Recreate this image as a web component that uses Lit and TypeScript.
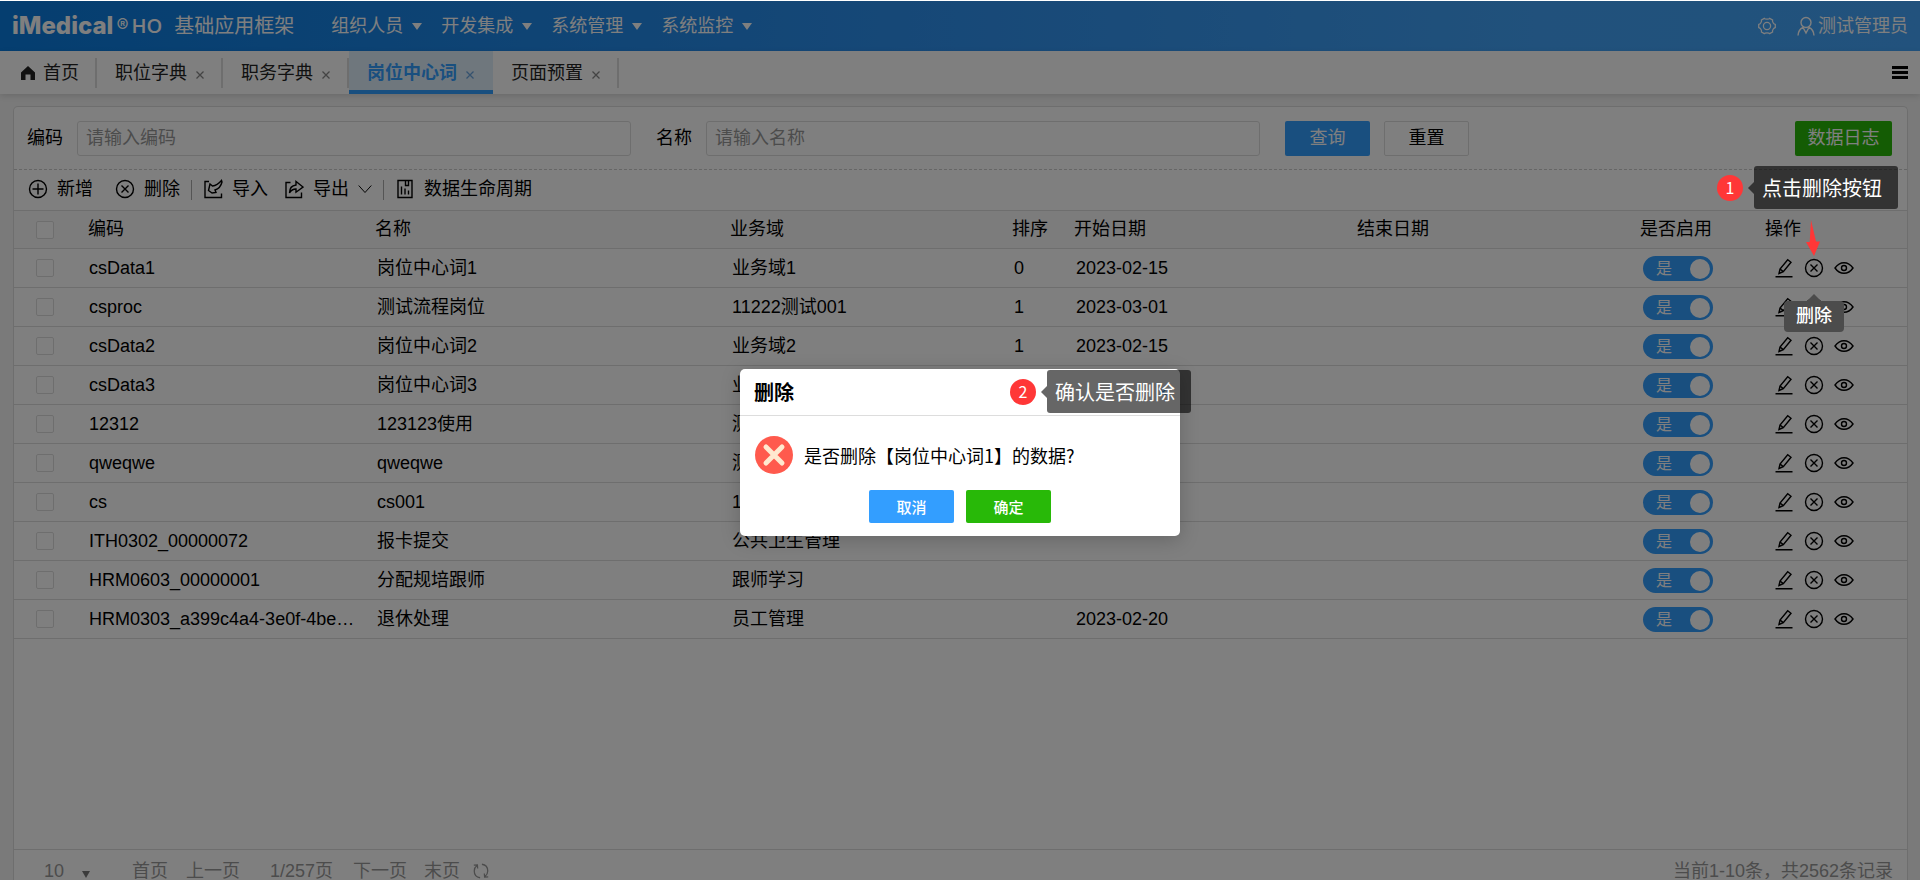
import { LitElement, html, css, svg } from "lit";
import { customElement, property } from "lit/decorators.js";

interface Row {
  code: string;
  name: string;
  domain: string;
  order: string;
  start: string;
}

const rows: Row[] = [
  { code: "csData1", name: "岗位中心词1", domain: "业务域1", order: "0", start: "2023-02-15" },
  { code: "csproc", name: "测试流程岗位", domain: "11222测试001", order: "1", start: "2023-03-01" },
  { code: "csData2", name: "岗位中心词2", domain: "业务域2", order: "1", start: "2023-02-15" },
  { code: "csData3", name: "岗位中心词3", domain: "业务域3", order: "", start: "" },
  { code: "12312", name: "123123使用", domain: "测试", order: "", start: "" },
  { code: "qweqwe", name: "qweqwe", domain: "测试", order: "", start: "" },
  { code: "cs", name: "cs001", domain: "1", order: "", start: "" },
  { code: "ITH0302_00000072", name: "报卡提交", domain: "公共卫生管理", order: "", start: "" },
  { code: "HRM0603_00000001", name: "分配规培跟师", domain: "跟师学习", order: "", start: "" },
  { code: "HRM0303_a399c4a4-3e0f-4be8-9c1d", name: "退休处理", domain: "员工管理", order: "", start: "2023-02-20" },
];

const glyphs = {
  add: svg`<circle cx="10" cy="10" r="8.5"/><path d="M10 4.5v11M4.5 10h11"/>`,
  remove: svg`<circle cx="10" cy="10" r="8.5"/><path d="M6.5 6.5l7 7M13.5 6.5l-7 7"/>`,
  import: svg`<path d="M6 2.500H2V18.500h16.500v-4M9 14L5.500 11.500 7 5l2.500 2c3-.3 6-2 9-5.500l.5 1.500c-1 4-3.500 7-7 8l1 2.500z"/>`,
  export: svg`<path d="M6.500 3.500H2v15h15.500v-5M5.500 14c0-4.500 2.500-7.500 6.500-8V2.500L19 8l-7 5.200v-3.200c-2.800 0-5 1.200-6.500 4z"/>`,
  down: svg`<path d="M1 5l9 10 9-10"/>`,
  report: svg`<path d="M3 1.500h14v17H3zM10.500 1.500v5h3v-5M6.500 7.500v8M10 9.500v6M13.500 11.500v4"/>`,
  edit: svg`<path d="M1.500 18.700h17M5 15.500l1-4.500 7.700-9.300 3.300 2.600-7.700 9.300zM6 11l3.300 2.600"/>`,
  eye: svg`<path d="M1 10c2.500-3.600 5.500-5.300 9-5.300s6.500 1.700 9 5.300c-2.500 3.600-5.500 5.300-9 5.300S3.500 13.600 1 10z"/><circle cx="10" cy="10" r="2.500"/>`,
  gear: svg`<path d="M7 1.500c1 1.300 5 1.300 6 0l3.200 1.900c-.6 1.600 1.200 4.700 3 4.900v3.400c-1.800.2-3.600 3.300-3 4.900L13 18.500c-1-1.300-5-1.300-6 0l-3.200-1.900c.6-1.600-1.200-4.700-3-4.900V8.300c1.800-.2 3.600-3.300 3-4.900z"/><circle cx="10" cy="10" r="4"/>`,
  user: svg`<circle cx="10" cy="6.500" r="5"/><path d="M2 19.500c.3-4.500 2.500-7 5-8l3 5.500 3-5.500c2.500 1 4.700 3.500 5 8"/>`,
  refresh: svg`<path d="M9 17.500C5 17 2.500 14 2.500 10c0-2.500 1-4.500 3-6M2 3.500l4-.3.300 4M11 2.500c4 .5 6.500 3.500 6.500 7.500 0 2.500-1 4.500-3 6M18 16.500l-4 .3-.3-4"/>`,
};

@customElement("ui-icon")
export class UiIcon extends LitElement {
  @property() name: keyof typeof glyphs = "add";

  static styles = css`
    :host {
      display: inline-flex;
      width: 20px;
      height: 20px;
      flex: none;
    }
    .glyph {
      width: 100%;
      height: 100%;
      fill: none;
      stroke: currentColor;
      stroke-width: 1.4;
    }
  `;

  render() {
    return html`<svg class="glyph" viewBox="0 0 20 20" aria-hidden="true">${glyphs[this.name]}</svg>`;
  }
}

@customElement("app-root")
export class AppRoot extends LitElement {
  static styles = css`
    :host {
      display: flex;
      flex-direction: column;
      position: relative;
      height: 100vh;
      overflow: hidden;
      background: #f4f4f4;
      color: #000;
      font-family: "Liberation Sans", "Noto Sans CJK SC", sans-serif;
      font-size: 18px;
      line-height: 20px;
    }
    * {
      box-sizing: border-box;
    }
    button,
    input,
    select {
      font: inherit;
      color: inherit;
      margin: 0;
      padding: 0;
      border: 0;
      background: none;
      border-radius: 0;
    }
    button {
      display: inline-flex;
      align-items: center;
      white-space: nowrap;
    }
    a {
      color: inherit;
      text-decoration: none;
    }

    .header {
      display: flex;
      align-items: center;
      flex: none;
      height: 51px;
      padding: 0 12px;
      border-top: 1px solid #fff;
      background: linear-gradient(90deg, #0a7ce0, #2f92f0 50%, #42a3f8 80%, #44a5fa);
      color: #fff;
    }
    .brand {
      display: flex;
      align-items: center;
      font-family: "Inter", sans-serif;
      font-size: 24px;
      font-weight: 800;
    }
    .reg {
      margin: 0 3px;
      font-size: 18px;
      font-weight: 400;
      align-self: flex-start;
    }
    .edition {
      font-family: "Open Sans", sans-serif;
      font-size: 20px;
      font-weight: 600;
    }
    .product {
      margin-left: 12px;
      font-size: 20px;
    }
    .menu {
      display: flex;
      flex: 1;
      gap: 19px;
      margin-left: 37px;
    }
    .menu-item {
      gap: 9px;
    }
    .caret {
      width: 0;
      border: 5px solid transparent;
      border-top: 7px solid currentColor;
      border-bottom: 0;
    }
    .tools {
      display: flex;
      align-items: center;
      gap: 20px;
    }
    .gear {
      width: 18px;
      height: 18px;
    }
    .account {
      display: flex;
      align-items: center;
      gap: 2px;
    }

    .tabs {
      display: flex;
      align-items: center;
      flex: none;
      height: 43px;
      padding-right: 12px;
      background: #fff;
      box-shadow: 0 2px 6px rgba(0, 0, 0, 0.12);
    }
    .tab {
      display: flex;
      align-items: center;
      gap: 8px;
      height: 30px;
      padding: 0 16px 0 18px;
      border-right: 2px solid #ddd;
      color: #222;
    }
    .home-tab {
      padding: 0 16px 0 20px;
      gap: 7px;
    }
    .home {
      width: 16px;
      height: 16px;
      fill: #222;
    }
    .current {
      height: 43px;
      border: 0;
      border-bottom: 4px solid #339eff;
      padding: 4px 18px 0;
      background: #dfeefb;
      color: #339eff;
      font-weight: 700;
    }
    .close {
      width: 10px;
      height: 10px;
      margin-top: 4px;
      color: #888;
    }
    .current .close {
      color: #6aa5dd;
    }
    .cross {
      width: 10px;
      height: 10px;
      fill: none;
      stroke: currentColor;
      stroke-width: 1.3;
    }
    .more {
      width: 16px;
      height: 13px;
      margin-left: auto;
      border-top: 3px solid #000;
      border-bottom: 3px solid #000;
      padding: 2px 0;
    }
    .bar {
      width: 16px;
      height: 3px;
      background: #000;
    }

    .main {
      display: flex;
      flex: 1;
      min-height: 0;
      padding: 12px 12px 0 13px;
    }
    .panel {
      display: flex;
      flex-direction: column;
      flex: 1;
      min-width: 0;
      border: 1px solid #ddd;
      border-bottom: 0;
      border-radius: 5px 5px 0 0;
      background: #fff;
    }
    .search {
      display: flex;
      align-items: center;
      flex: none;
      height: 63px;
      padding: 0 15px 0 13px;
      border-bottom: 1px dashed #ccc;
    }
    .field {
      flex: 1;
      min-width: 0;
      max-width: 554px;
      height: 35px;
      margin: 0 25px 0 14px;
      padding: 0 8px;
      border: 1px solid #ddd;
      border-radius: 3px;
    }
    .field::placeholder {
      color: #999;
      opacity: 1;
    }
    .btn {
      justify-content: center;
      width: 85px;
      height: 35px;
      border-radius: 2px;
    }
    .blue {
      background: #339eff;
      color: #fff;
    }
    .plain {
      margin-left: 14px;
      border: 1px solid #ddd;
    }
    .green {
      background: #28b908;
      color: #fff;
    }
    .log {
      width: 97px;
      margin-left: auto;
    }

    .toolbar {
      display: flex;
      align-items: center;
      flex: none;
      height: 40px;
      padding: 0 14px 3px;
    }
    .tool {
      gap: 9px;
      margin-right: 22px;
    }
    .tool.near {
      margin-right: 16px;
    }
    .tool.last {
      margin-right: 11px;
    }
    .rule {
      width: 1px;
      height: 20px;
      margin: 3px 11px 0 0;
      background: #aaa;
    }
    .small {
      width: 14px;
      height: 14px;
    }

    .grid-wrap {
      flex: 1;
      min-height: 0;
    }
    .grid {
      width: 100%;
      table-layout: fixed;
      border-collapse: separate;
      border-spacing: 0;
      border-top: 1px solid #ddd;
    }
    .c-check { width: 66px; }
    .c-code { width: 287px; }
    .c-name { width: 355px; }
    .c-domain { width: 282px; }
    .c-order { width: 62px; }
    .c-date { width: 283px; }
    .c-on { width: 125px; }
    .c-act { width: 150px; }
    .grid th,
    .grid td {
      height: 39px;
      padding: 0 0 1px 10px;
      border-bottom: 1px solid #ddd;
      text-align: left;
      font-weight: 400;
      white-space: nowrap;
      overflow: hidden;
      text-overflow: ellipsis;
    }
    .grid th {
      height: 38px;
      padding-left: 8px;
      background: #f8f8f8;
    }
    .grid .code {
      padding: 0 4px 1px 9px;
    }
    .grid .pick {
      padding: 0 0 0 22px;
    }
    .box {
      display: block;
      appearance: none;
      width: 18px;
      height: 18px;
      border: 1px solid #ddd;
      border-radius: 2px;
      background: #fff;
    }
    .grid .act {
      padding-left: 17px;
    }
    .actions {
      display: flex;
      gap: 10px;
    }
    .switch {
      display: flex;
      align-items: center;
      justify-content: space-between;
      position: relative;
      width: 70px;
      height: 25px;
      margin: 2px 0 0 1px;
      padding: 0 3px 0 13px;
      border-radius: 13px;
      background: #339eff;
      color: #fff;
      font-size: 16px;
    }
    .switch-input {
      position: absolute;
      inset: 0;
      opacity: 0;
    }
    .knob {
      width: 20px;
      height: 20px;
      border-radius: 50%;
      background: #fff;
    }

    .pager {
      display: flex;
      align-items: center;
      flex: none;
      height: 31px;
      padding: 11px 14px 0 30px;
      border-top: 1px solid #ddd;
      color: #999;
    }
    .size {
      display: flex;
      align-items: center;
      margin-right: 42px;
    }
    .size-select {
      appearance: none;
      width: 38px;
      height: 20px;
    }
    .size .caret {
      margin-top: 8px;
      border-width: 7px 4px 0;
      color: #777;
    }
    .prev {
      margin: 0 30px 0 18px;
    }
    .next {
      margin: 0 17px 0 20px;
    }
    .reload {
      margin-left: 12px;
    }
    .turn {
      width: 18px;
      height: 18px;
    }
    .total {
      margin-left: auto;
    }

    .shade {
      position: absolute;
      inset: 1px 0 0;
      background: rgba(0, 0, 0, 0.5);
    }
    .dialog {
      position: absolute;
      top: 369px;
      left: calc(50% - 220px);
      width: 440px;
      border-radius: 5px;
      background: #fff;
      box-shadow: 0 4px 20px rgba(0, 0, 0, 0.2);
      font-family: "Noto Sans CJK SC", sans-serif;
    }
    .dialog-head {
      display: flex;
      align-items: center;
      justify-content: space-between;
      height: 47px;
      padding: 0 12px 0 14px;
      border-bottom: 1px solid #ddd;
    }
    .title {
      margin: 0;
      font-size: 20px;
      font-weight: 700;
    }
    .dismiss {
      color: #339eff;
    }
    .message {
      display: flex;
      align-items: center;
      gap: 11px;
      padding: 20px 14px 0 15px;
    }
    .alert {
      width: 38px;
      height: 38px;
      flex: none;
    }
    .text {
      margin: 0;
    }
    .choices {
      display: flex;
      justify-content: center;
      gap: 12px;
      padding: 16px 0 13px;
    }
    .choices .btn {
      height: 33px;
      font-size: 15px;
      font-weight: 500;
    }

    .note {
      display: flex;
      align-items: center;
      position: absolute;
      font-family: "Noto Sans CJK SC", sans-serif;
      color: #fff;
    }
    .note-row {
      top: 166px;
      right: 22px;
    }
    .note-dialog {
      top: 1px;
      right: -11px;
    }
    .badge {
      width: 26px;
      height: 26px;
      margin-right: 5px;
      border-radius: 50%;
      background: #ff3737;
      font-size: 16px;
      line-height: 24px;
      text-align: center;
    }
    .beak {
      width: 0;
      border: 6px solid transparent;
      border-right-color: rgba(0, 0, 0, 0.6);
      border-left: 0;
    }
    .bubble {
      width: 144px;
      height: 43px;
      padding: 0 8px;
      border-radius: 3px;
      background: rgba(0, 0, 0, 0.6);
      font-size: 20px;
      line-height: 43px;
      white-space: nowrap;
    }
    .pointer {
      position: absolute;
      top: 220px;
      right: 100px;
      width: 14px;
      height: 36px;
      fill: #ff3737;
    }
    .tip {
      position: absolute;
      top: 301px;
      right: 76px;
      width: 60px;
      height: 31px;
      border-radius: 4px;
      background: #4c4c4c;
      color: #fff;
      font-weight: 500;
      line-height: 31px;
      text-align: center;
    }
    .tip::before {
      content: "";
      position: absolute;
      top: -7px;
      left: 23px;
      border: 7px solid transparent;
      border-top: 0;
      border-bottom-color: #4c4c4c;
    }
  `;

  private cross() {
    return html`<svg class="cross" viewBox="0 0 10 10" aria-hidden="true"><path d="M1.500 1.500l7 7M8.500 1.500l-7 7" /></svg>`;
  }

  private tab(label: string, current = false) {
    return html`<div class="tab ${current ? "current" : ""}">
      <a href="#">${label}</a>
      <button class="close" aria-label="关闭">${this.cross()}</button>
    </div>`;
  }

  private row(r: Row) {
    return html`<tr>
      <td class="pick"><input class="box" type="checkbox" aria-label=${r.code} /></td>
      <td class="code">${r.code}</td>
      <td>${r.name}</td>
      <td>${r.domain}</td>
      <td>${r.order}</td>
      <td>${r.start}</td>
      <td></td>
      <td>
        <label class="switch">
          <input class="switch-input" type="checkbox" checked />
          <span>是</span><span class="knob"></span>
        </label>
      </td>
      <td class="act">
        <div class="actions">
          <button aria-label="编辑"><ui-icon name="edit"></ui-icon></button>
          <button aria-label="删除"><ui-icon name="remove"></ui-icon></button>
          <button aria-label="查看"><ui-icon name="eye"></ui-icon></button>
        </div>
      </td>
    </tr>`;
  }

  private note(place: string, num: number, text: string) {
    return html`<div class="note ${place}">
      <span class="badge">${num}</span><span class="beak"></span><span class="bubble">${text}</span>
    </div>`;
  }

  render() {
    return html`
      <header class="header">
        <div class="brand">iMedical<span class="reg">®</span><span class="edition">HO</span></div>
        <span class="product">基础应用框架</span>
        <nav class="menu">
          ${["组织人员", "开发集成", "系统管理", "系统监控"].map(
            (m) => html`<button class="menu-item">${m}<span class="caret"></span></button>`
          )}
        </nav>
        <div class="tools">
          <button aria-label="设置"><ui-icon class="gear" name="gear"></ui-icon></button>
          <a class="account" href="#"><ui-icon name="user"></ui-icon>测试管理员</a>
        </div>
      </header>

      <nav class="tabs">
        <a class="tab home-tab" href="#">
          <svg class="home" viewBox="0 0 16 16" aria-hidden="true"><path d="M8 1l7 6.500V15h-4.500v-5.500h-5V15H1V7.500z" /></svg>首页
        </a>
        ${this.tab("职位字典")} ${this.tab("职务字典")} ${this.tab("岗位中心词", true)} ${this.tab("页面预置")}
        <button class="more" aria-label="更多"><span class="bar"></span></button>
      </nav>

      <main class="main">
        <section class="panel">
          <form class="search">
            <label for="code">编码</label>
            <input class="field" id="code" placeholder="请输入编码" />
            <label for="name">名称</label>
            <input class="field" id="name" placeholder="请输入名称" />
            <button class="btn blue" type="button">查询</button>
            <button class="btn plain" type="button">重置</button>
            <button class="btn green log" type="button">数据日志</button>
          </form>

          <div class="toolbar">
            <button class="tool"><ui-icon name="add"></ui-icon>新增</button>
            <button class="tool last"><ui-icon name="remove"></ui-icon>删除</button>
            <span class="rule"></span>
            <button class="tool near"><ui-icon name="import"></ui-icon>导入</button>
            <button class="tool last"><ui-icon name="export"></ui-icon>导出<ui-icon class="small" name="down"></ui-icon></button>
            <span class="rule"></span>
            <button class="tool"><ui-icon name="report"></ui-icon>数据生命周期</button>
          </div>

          <div class="grid-wrap">
            <table class="grid">
              <colgroup>
                <col class="c-check" /><col class="c-code" /><col class="c-name" /><col class="c-domain" />
                <col class="c-order" /><col class="c-date" /><col class="c-date" /><col class="c-on" /><col class="c-act" />
              </colgroup>
              <thead>
                <tr>
                  <th class="pick"><input class="box" type="checkbox" aria-label="全选" /></th>
                  ${["编码", "名称", "业务域", "排序", "开始日期", "结束日期", "是否启用", "操作"].map(
                    (h) => html`<th>${h}</th>`
                  )}
                </tr>
              </thead>
              <tbody>
                ${rows.map((r) => this.row(r))}
              </tbody>
            </table>
          </div>

          <footer class="pager">
            <label class="size">
              <select class="size-select" aria-label="每页条数"><option>10</option></select>
              <span class="caret"></span>
            </label>
            <button>首页</button>
            <button class="prev">上一页</button>
            <span>1/257页</span>
            <button class="next">下一页</button>
            <button>末页</button>
            <button class="reload" aria-label="刷新"><ui-icon class="turn" name="refresh"></ui-icon></button>
            <span class="total">当前1-10条，共2562条记录</span>
          </footer>
        </section>
      </main>

      <div class="shade"></div>

      <div class="dialog" role="dialog" aria-labelledby="dialog-title">
        <div class="dialog-head">
          <h2 class="title" id="dialog-title">删除</h2>
          <button class="dismiss" aria-label="关闭">${this.cross()}</button>
        </div>
        <div class="message">
          <svg class="alert" viewBox="0 0 38 38" aria-hidden="true">
            <circle cx="19" cy="19" r="19" fill="#ff5a4d" />
            <path d="M11 11l16 16M27 11L11 27" stroke="#ffe9cf" stroke-width="5" stroke-linecap="round" />
          </svg>
          <p class="text">是否删除【岗位中心词1】的数据?</p>
        </div>
        <div class="choices">
          <button class="btn blue">取消</button>
          <button class="btn green">确定</button>
        </div>
        ${this.note("note-dialog", 2, "确认是否删除")}
      </div>

      ${this.note("note-row", 1, "点击删除按钮")}
      <svg class="pointer" viewBox="0 0 14 36" aria-hidden="true"><path d="M5 0l5 21.500h4L8 36 0 22h3.700z" /></svg>
      <div class="tip" role="tooltip">删除</div>
    `;
  }
}
